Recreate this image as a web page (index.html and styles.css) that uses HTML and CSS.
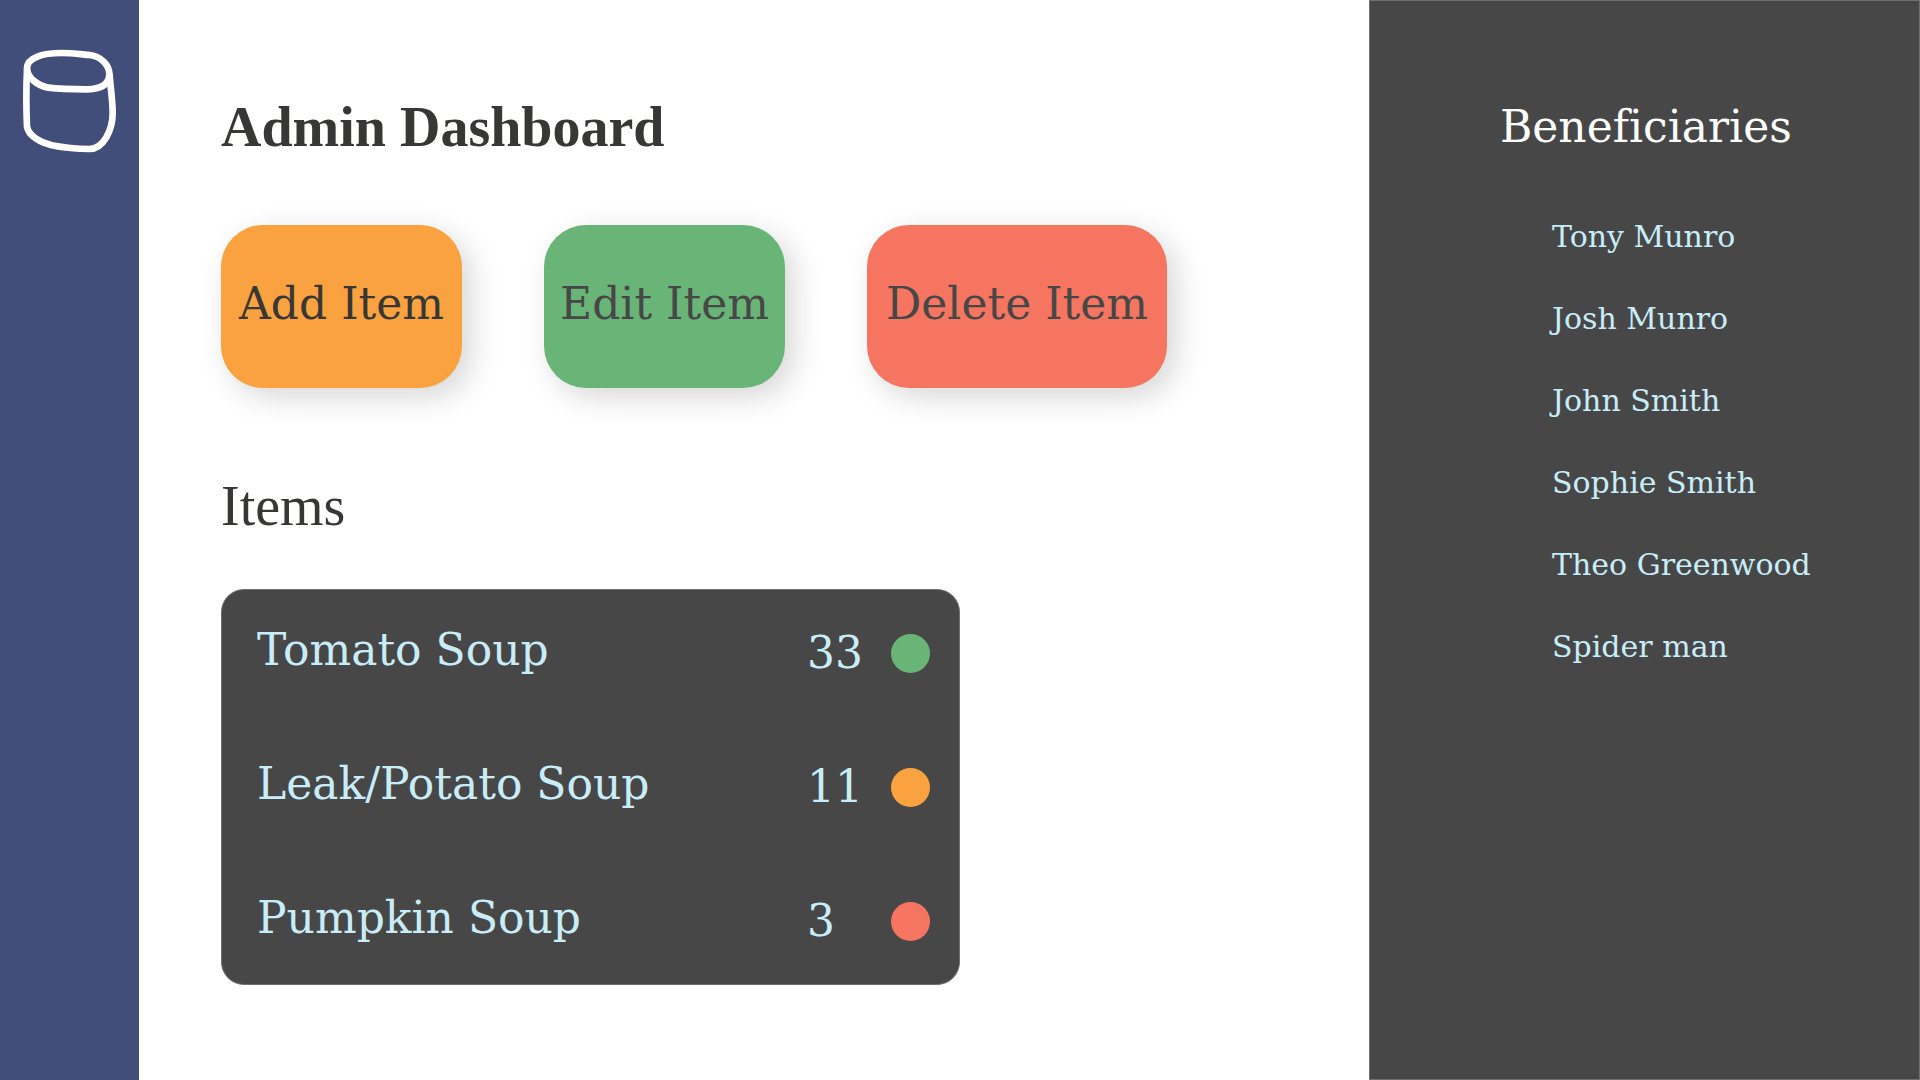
FILE: index.html
```html
<!DOCTYPE html>
<html lang="en">
<head>
<meta charset="utf-8">
<meta name="viewport" content="width=device-width, initial-scale=1">
<title>Admin Dashboard</title>
<link rel="stylesheet" href="styles.css">
</head>
<body>
<div class="layout">
  <header class="sidebar">
    <svg class="logo" viewBox="66 84 288 318" role="img" aria-label="Soup can">
      <path d="M81 145C81 112 130 99 185 99C215 99 245 103 270 105C302 109 328 135 328 162C328 195 300 207 262 208C225 208 175 207 145 203C112 197 81 172 81 145Z"/>
      <path d="M81 150C79 190 78 250 81 320C86 350 125 368 155 376C190 383 235 387 268 387C310 387 338 330 338 280C338 240 332 210 329 165"/>
    </svg>
  </header>
  <main class="content">
    <h1 class="title">Admin Dashboard</h1>
    <div class="actions">
      <button type="button" class="action action-add">Add Item</button>
      <button type="button" class="action action-edit">Edit Item</button>
      <button type="button" class="action action-delete">Delete Item</button>
    </div>
    <h2 class="subtitle">Items</h2>
    <div class="card">
      <table class="items">
        <tbody>
          <tr>
            <th class="item-name" scope="row">Tomato Soup</th>
            <td class="item-count">33</td>
            <td class="item-status"><span class="dot dot-high"></span></td>
          </tr>
          <tr>
            <th class="item-name" scope="row">Leak/Potato Soup</th>
            <td class="item-count">11</td>
            <td class="item-status"><span class="dot dot-medium"></span></td>
          </tr>
          <tr>
            <th class="item-name" scope="row">Pumpkin Soup</th>
            <td class="item-count">3</td>
            <td class="item-status"><span class="dot dot-low"></span></td>
          </tr>
        </tbody>
      </table>
    </div>
  </main>
  <aside class="panel">
    <h2 class="panel-title">Beneficiaries</h2>
    <ul class="people">
      <li>Tony Munro</li>
      <li>Josh Munro</li>
      <li>John Smith</li>
      <li>Sophie Smith</li>
      <li>Theo Greenwood</li>
      <li>Spider man</li>
    </ul>
  </aside>
</div>
</body>
</html>
```
FILE: styles.css
```css
:root {
  --navy: #404e79;
  --dark: #474747;
  --ink: #373735;
  --orange: #f9a23f;
  --green: #69b578;
  --red: #f67561;
  --ice: #c8edf9;
  --slab: "DejaVu Serif", serif;
  --serif: "Liberation Serif", serif;
}

* {
  box-sizing: border-box;
}

body {
  margin: 0;
  background: #fff;
  color: var(--ink);
  font-family: var(--slab);
  font-variant-ligatures: none;
}

.layout {
  display: grid;
  grid-template-columns: 139px 1fr 551px;
  min-height: 100vh;
}

.sidebar {
  padding: 48px 22px;
  background: var(--navy);
}

.logo {
  display: block;
  width: 96px;
  height: 106px;
  fill: none;
  stroke: #fff;
  stroke-width: 20;
  stroke-linecap: round;
}

.content {
  padding: 95px 82px;
}

.title,
.subtitle {
  margin: 0;
  font-family: var(--serif);
  font-size: 56px;
  line-height: 64px;
}

.subtitle {
  font-weight: 400;
}

.actions {
  display: flex;
  flex-wrap: wrap;
  gap: 82px;
  margin: 66px 0 86px;
}

.action {
  min-width: 241px;
  min-height: 163px;
  padding: 0 12px 6px;
  border: 0;
  border-radius: 42px;
  box-shadow: 9px 9px 30px rgba(0, 0, 0, 0.16);
  color: var(--dark);
  font-family: var(--slab);
  font-size: 44px;
  line-height: 56px;
  cursor: pointer;
}

.action-add {
  background: var(--orange);
  color: var(--ink);
}

.action-edit {
  background: var(--green);
}

.action-delete {
  min-width: 300px;
  background: var(--red);
}

.card {
  max-width: 739px;
  margin-top: 51px;
  padding: 33px 29px 33px 35px;
  border: 1px solid #707070;
  border-radius: 23px;
  background: var(--dark);
}

.items {
  width: 100%;
  border-collapse: collapse;
  color: var(--ice);
  font-size: 44px;
  line-height: 54px;
}

.items th,
.items td {
  height: 60px;
  padding: 0;
  text-align: left;
  font-weight: 400;
}

.items tr + tr th,
.items tr + tr td {
  height: 134px;
  padding-top: 74px;
}

.items .item-name {
  padding-bottom: 6px;
}

.item-count {
  width: 84px;
}

.item-status {
  width: 39px;
}

.dot {
  display: block;
  width: 39px;
  height: 39px;
  border-radius: 50%;
}

.dot-high {
  background: var(--green);
}

.dot-medium {
  background: var(--orange);
}

.dot-low {
  background: var(--red);
}

.panel {
  padding: 94px 40px 94px 130px;
  border: 1px solid #707070;
  background: var(--dark);
}

.panel-title {
  margin: 0 0 58px;
  color: #fff;
  font-size: 44px;
  font-weight: 400;
  line-height: 64px;
}

.people {
  display: grid;
  gap: 42px;
  margin: 0;
  padding: 0 0 0 52px;
  color: var(--ice);
  font-size: 30px;
  line-height: 40px;
  list-style: none;
}
```
